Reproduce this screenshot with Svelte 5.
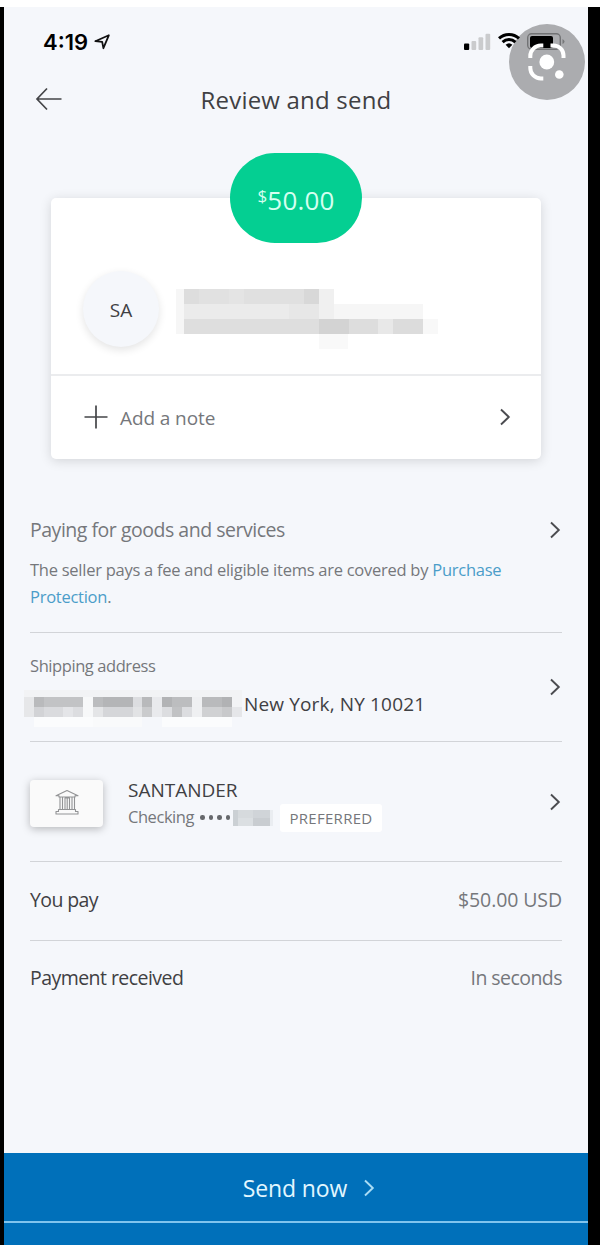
<script>
  const amount = '50.00';

  // redacted text: [x, y, width, height, colour]
  const payeeBlocks = [
    [8, 8, 8, 45, '#f6f6f6'],
    [16, 8, 15, 15, '#dddddd'],
    [31, 8, 30, 15, '#e1e1e1'],
    [61, 8, 15, 15, '#e4e4e4'],
    [76, 8, 60, 15, '#e0e0e0'],
    [136, 8, 15, 15, '#d8d8d8'],
    [151, 8, 15, 30, '#f0f0f0'],
    [16, 23, 105, 15, '#ebebeb'],
    [121, 23, 30, 15, '#e7e7e7'],
    [166, 23, 89, 15, '#f6f6f6'],
    [16, 38, 135, 15, '#dedede'],
    [151, 38, 30, 15, '#d3d3d3'],
    [181, 38, 29, 15, '#dddddd'],
    [210, 38, 15, 15, '#e8e8e8'],
    [225, 38, 30, 15, '#dcdcdc'],
    [255, 38, 15, 15, '#f8f8f8'],
    [151, 53, 29, 15, '#f9f9f9'],
  ];

  const addressBlocks = [
    [0, 0, 218, 7, '#f2f3f5'],
    [0, 7, 10, 20, '#e6e7e9'],
    [10, 7, 10, 10, '#b9babc'],
    [20, 7, 39, 10, '#c2c3c5'],
    [59, 7, 10, 20, '#f7f8f9'],
    [69, 7, 10, 10, '#bbbcbe'],
    [79, 7, 30, 10, '#b4b5b7'],
    [109, 7, 9, 10, '#dcdde0'],
    [118, 7, 10, 10, '#b8b9bb'],
    [128, 7, 10, 20, '#e9eaed'],
    [138, 7, 10, 10, '#b2b3b5'],
    [148, 7, 20, 10, '#bcbdbf'],
    [168, 7, 10, 20, '#eff0f2'],
    [178, 7, 20, 10, '#b9babc'],
    [198, 7, 10, 10, '#b1b2b4'],
    [208, 7, 10, 10, '#f2f3f5'],
    [10, 17, 10, 10, '#d2d3d6'],
    [20, 17, 19, 10, '#dadbde'],
    [39, 17, 10, 10, '#e4e5e8'],
    [49, 17, 10, 10, '#dcdde0'],
    [69, 17, 10, 10, '#e4e5e7'],
    [79, 17, 30, 10, '#d5d6d9'],
    [109, 17, 9, 10, '#e2e3e5'],
    [118, 17, 10, 10, '#cacbcd'],
    [138, 17, 10, 10, '#dcdde0'],
    [148, 17, 10, 10, '#c1c2c4'],
    [158, 17, 10, 10, '#dcdde0'],
    [178, 17, 20, 10, '#d0d1d3'],
    [198, 17, 10, 10, '#c8c9cb'],
    [208, 17, 10, 10, '#e5e6e9'],
    [10, 27, 59, 10, '#fbfcfd'],
    [69, 27, 49, 10, '#f9fafb'],
    [138, 27, 70, 10, '#fbfcfd'],
  ];

  const accountBlocks = [
    [0, 0, 5, 16, '#cbd0d4'],
    [5, 0, 15, 8, '#d6dadd'],
    [5, 8, 15, 8, '#dbdfe2'],
    [20, 0, 17, 8, '#d0d4d8'],
    [20, 8, 17, 8, '#c9cdd1'],
    [37, 0, 3, 16, '#eaedf1'],
  ];
</script>

{#snippet chevron()}
  <svg class="chevron" width="12" height="18" viewBox="0 0 12 18">
    <path d="M2 1.5 9.8 9 2 16.5" />
  </svg>
{/snippet}

{#snippet redacted(blocks, width, height)}
  <svg class="redacted" {width} {height} viewBox="0 0 {width} {height}" shape-rendering="crispEdges">
    {#each blocks as [x, y, w, h, fill]}
      <rect {x} {y} width={w} height={h} {fill} />
    {/each}
  </svg>
{/snippet}

<div class="frame">
  <div class="phone">
    <div class="status-bar">
      <div class="clock">
        <span class="time">4:19</span>
        <svg width="16" height="16" viewBox="0 0 16 16">
          <path d="M1.3 7.2 14.8 1.3 9.4 14.2 8.2 7.8Z" fill="none" stroke="#111" stroke-width="1.8" stroke-linejoin="round" />
        </svg>
      </div>
      <div class="indicators">
        <svg class="signal" width="27" height="18" viewBox="0 0 27 18">
          <rect x="0" y="10.5" width="5.2" height="6.5" rx="1" fill="#000" />
          <rect x="7.5" y="8" width="4.7" height="9" rx="1" fill="#cacbcd" />
          <rect x="14.5" y="4.2" width="4.7" height="12.8" rx="1" fill="#cacbcd" />
          <rect x="21.5" y="0.8" width="4.7" height="16.2" rx="1" fill="#cacbcd" />
        </svg>
        <svg class="wifi" width="22" height="17" viewBox="0 0 22 17">
          <path d="M1 6.4A14.5 14.5 0 0 1 21 6.4M4.6 10.2A9.2 9.2 0 0 1 17.4 10.2" fill="none" stroke="#000" stroke-width="3" />
          <path d="M7.6 12.8a5 5 0 0 1 6.8 0L11 16.3Z" fill="#000" />
        </svg>
        <svg class="battery" width="38" height="17" viewBox="0 0 38 17">
          <rect x="0.7" y="0.7" width="32.6" height="15.6" rx="4" fill="none" stroke="#727375" stroke-width="1.4" />
          <rect x="3" y="3" width="23" height="12" rx="2" fill="#000" />
          <path d="M35.5 6v5q2-1 2-2.5t-2-2.5" fill="#77787a" />
        </svg>
      </div>
      <div class="lens">
        <svg width="76" height="76" viewBox="0 0 76 76">
          <g fill="none" stroke="#fff" stroke-width="4">
            <path d="M21.3 34V32a10.5 10.5 0 0 1 10.5-10.5h2.5" />
            <path d="M41.5 21.5h3a10 10 0 0 1 10 10V34" />
            <path d="M21.3 42v2a10.5 10.5 0 0 0 10.5 10.5h2.5" />
          </g>
          <circle cx="37.8" cy="38" r="7.4" fill="#fff" />
          <circle cx="50.3" cy="50.5" r="4.3" fill="#fff" />
        </svg>
      </div>
    </div>

    <header class="header">
      <svg class="back" width="28" height="24" viewBox="0 0 28 24">
        <path d="M12 1.5 2 12 12 22.5M2 12H26.5" />
      </svg>
      <h1>Review and send</h1>
    </header>

    <section class="card">
      <div class="amount"><sup>$</sup>{amount}</div>
      <div class="payee">
        <div class="avatar">SA</div>
        {@render redacted(payeeBlocks, 270, 68)}
      </div>
      <div class="note">
        <svg width="24" height="24" viewBox="0 0 24 24">
          <path d="M12 0.5v23M0.5 12h23" stroke="#444548" stroke-width="1.7" />
        </svg>
        <span>Add a note</span>
        {@render chevron()}
      </div>
    </section>

    <main>
      <section class="row purpose">
        <div class="text">
          <h2>Paying for goods and services</h2>
          <p>The seller pays a fee and eligible items are covered by <a href="#protection">Purchase<br />Protection</a>.</p>
        </div>
        {@render chevron()}
      </section>

      <section class="row shipping">
        <div class="text">
          <div class="label">Shipping address</div>
          <div class="address">
            {@render redacted(addressBlocks, 218, 37)}
            <span>New York, NY 10021</span>
          </div>
        </div>
        {@render chevron()}
      </section>

      <section class="row funding">
        <div class="bank-card">
          <svg width="26" height="26" viewBox="0 0 26 26">
            <path d="M2 6.7 13 1.5 24 6.7H21V8H5V6.7ZM6 8v12.500M8.500 8v12.500M18 8v12.500M20.500 8v12.500M11 20.500V9h4.500v11.500M13.200 9v11.500M4.500 20.500h17v2H24V25H2v-2.500h2.500Z" />
          </svg>
        </div>
        <div class="text">
          <div class="bank">SANTANDER</div>
          <div class="account">
            <span class="type">Checking</span>
            <span class="dots"><i></i><i></i><i></i><i></i></span>
            {@render redacted(accountBlocks, 40, 16)}
            <span class="tag">PREFERRED</span>
          </div>
        </div>
        {@render chevron()}
      </section>

      <section class="row total">
        <span class="name">You pay</span>
        <span class="value">$50.00 USD</span>
      </section>

      <section class="row received">
        <span class="name">Payment received</span>
        <span class="value">In seconds</span>
      </section>
    </main>

    <footer>
      <button type="button">
        <span>Send now</span>
        {@render chevron()}
      </button>
    </footer>
  </div>
</div>

<style>
  :global(body) {
    background: #000;
  }

  .frame {
    box-sizing: border-box;
    height: 1245px;
    padding: 0 12px 0 4px;
    border-top: 7px solid #fff;
    background: #000;
    font-family: 'Open Sans', 'Noto Sans', sans-serif;
    font-weight: 450;
    color: #3f4043;
    overflow: hidden;
  }

  .phone {
    display: flex;
    flex-direction: column;
    height: 1238px;
    background: #f5f7fb;
  }

  h1,
  h2,
  p {
    margin: 0;
    font-weight: inherit;
  }

  svg {
    display: block;
    flex: none;
  }

  .chevron path {
    fill: none;
    stroke: #4b4c50;
    stroke-width: 1.9;
  }

  .status-bar {
    position: relative;
    display: flex;
    justify-content: space-between;
    box-sizing: border-box;
    height: 68px;
    padding: 24px 23px 0 39px;
  }

  .clock {
    display: flex;
    gap: 6px;
    height: 22px;
    color: #000;
  }

  .clock svg {
    margin-top: 3px;
  }

  .time {
    width: 45px;
    font-family: Inter, sans-serif;
    font-size: 22px;
    font-weight: 600;
    line-height: 22px;
    white-space: nowrap;
  }

  .indicators {
    position: relative;
    z-index: 1;
    display: flex;
  }

  .wifi {
    margin: 1px 7px 0 7px;
  }

  .signal,
  .battery {
    margin-top: 2px;
  }

  .lens {
    position: absolute;
    top: 17px;
    right: 3px;
    width: 76px;
    height: 76px;
    border-radius: 50%;
    background: #abacaf;
  }

  .lens svg {
    position: relative;
    z-index: 2;
  }

  .header {
    display: grid;
    grid-template-columns: 60px 1fr 60px;
    align-items: center;
    height: 48px;
  }

  .back {
    margin-left: 31px;
  }

  .back path {
    fill: none;
    stroke: #444548;
    stroke-width: 1.7;
  }

  h1 {
    margin-top: 2px;
    font-size: 24px;
    letter-spacing: 0.2px;
    line-height: 34px;
    text-align: center;
  }

  .card {
    display: flex;
    flex-direction: column;
    height: 261px;
    margin: 75px 47px 0;
    border-radius: 5px;
    background: #fff;
    box-shadow: 0 2px 12px rgba(0, 0, 0, 0.14);
  }

  .amount {
    display: flex;
    align-items: center;
    justify-content: center;
    align-self: center;
    box-sizing: border-box;
    width: 132px;
    height: 90px;
    margin-top: -45px;
    padding-top: 4px;
    border-radius: 45px;
    background: #04cf92;
    color: #d5fff0;
    font-size: 26px;
    letter-spacing: 0.2px;
  }

  .amount sup {
    margin-top: -8px;
    font-size: 17px;
    line-height: 20px;
  }

  .payee {
    display: flex;
    align-items: center;
    box-sizing: border-box;
    height: 133px;
    padding-left: 32px;
    border-bottom: 2px solid #ebecee;
  }

  .avatar {
    width: 76px;
    height: 76px;
    margin-top: 1px;
    border-radius: 50%;
    background: #f5f7fb;
    box-shadow: 0 3px 8px rgba(0, 0, 0, 0.11);
    font-size: 19px;
    line-height: 78px;
    text-align: center;
  }

  .payee .redacted {
    margin: 13px 0 0 9px;
  }

  .note {
    display: flex;
    flex: 1;
    align-items: center;
    padding: 0 30px 1px 33px;
    color: #75777b;
    font-size: 19px;
    letter-spacing: -0.1px;
  }

  .note span {
    flex: 1;
    margin: 1px 0 0 12px;
  }

  main {
    flex: 1;
    margin: 0 26px;
  }

  .row {
    display: flex;
    align-items: center;
    box-sizing: border-box;
    border-bottom: 1px solid #d2d4d8;
  }

  .row .text {
    flex: 1;
  }

  .row .chevron {
    margin-right: 1px;
  }

  .purpose {
    align-items: flex-start;
    height: 174px;
    padding-top: 57px;
    color: #75777b;
  }

  .purpose .chevron {
    margin-top: 5px;
  }

  h2 {
    font-size: 19.5px;
    letter-spacing: -0.48px;
    line-height: 28px;
  }

  p {
    margin-top: 12px;
    font-size: 16.5px;
    letter-spacing: -0.26px;
    line-height: 27px;
    white-space: nowrap;
  }

  a {
    color: #4b9dc9;
    text-decoration: none;
  }

  .shipping {
    height: 109px;
  }

  .label {
    margin-top: 6px;
    color: #75777b;
    font-size: 16.5px;
    letter-spacing: -0.42px;
    line-height: 24px;
  }

  .address {
    display: flex;
    align-items: center;
    height: 37px;
    margin: 12px 0 0 -6px;
    font-size: 19px;
    letter-spacing: 0.15px;
    white-space: nowrap;
  }

  .address span {
    margin: -9px 0 0 2px;
  }

  .funding {
    height: 120px;
  }

  .bank-card {
    display: flex;
    align-items: center;
    justify-content: center;
    width: 73px;
    height: 47px;
    margin: 3px 25px 0 0;
    border-radius: 4px;
    background: #fafafa;
    box-shadow: 0 2px 8px rgba(0, 0, 0, 0.26);
  }

  .bank-card svg {
    margin-top: -2px;
  }

  .bank-card path {
    fill: none;
    stroke: #929395;
    stroke-width: 1.1;
    stroke-linejoin: round;
  }

  .bank {
    margin-top: 4px;
    font-size: 19px;
    line-height: 28px;
  }

  .account {
    display: flex;
    align-items: center;
    height: 28px;
    color: #75777b;
    font-size: 16.5px;
    letter-spacing: -0.45px;
  }

  .type {
    width: 72px;
    margin-top: -3px;
  }

  .dots {
    display: flex;
    gap: 4px;
    width: 33px;
  }

  .dots i {
    width: 4.5px;
    height: 4.5px;
    border-radius: 50%;
    background: #66686c;
  }

  .tag {
    box-sizing: border-box;
    width: 102px;
    height: 28px;
    margin-left: 7px;
    border-radius: 3px;
    background: #fff;
    font-size: 15px;
    letter-spacing: 0.3px;
    line-height: 29px;
    text-align: center;
  }

  .total,
  .received {
    justify-content: space-between;
    height: 79px;
    padding-bottom: 3px;
    font-size: 19.5px;
    letter-spacing: -0.1px;
  }

  .total .name {
    letter-spacing: -0.6px;
  }

  .received {
    height: 73px;
    padding-bottom: 0;
    border-bottom: none;
    letter-spacing: -0.55px;
  }

  .value {
    color: #75777b;
  }

  footer {
    height: 92px;
    background: #0070ba;
  }

  button {
    display: flex;
    align-items: center;
    justify-content: center;
    gap: 16px;
    width: 100%;
    height: 70px;
    padding: 2px 0 0 26px;
    border: none;
    border-bottom: 2px solid #80c4ee;
    background: transparent;
    color: #e2f7ff;
    font: inherit;
    font-size: 23px;
    letter-spacing: -0.1px;
  }

  footer .chevron path {
    stroke: #a9dcf5;
  }
</style>
